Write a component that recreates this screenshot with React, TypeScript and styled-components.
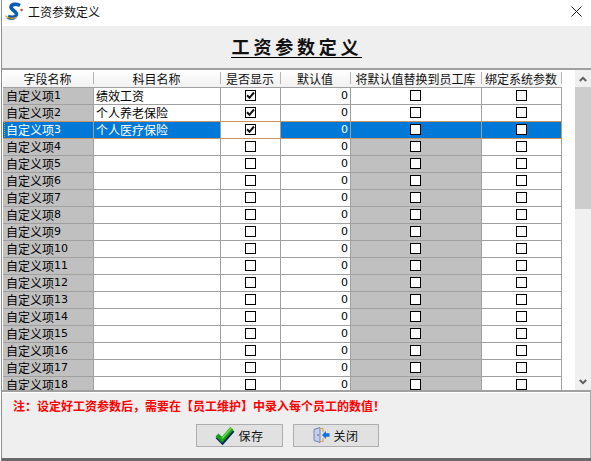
import React from "react"
import styled, { createGlobalStyle } from "styled-components"

const GlobalStyle = createGlobalStyle`
  html, body {
    margin: 0;
    padding: 0;
    background: #ffffff;
  }
  * {
    box-sizing: border-box;
  }
`

const COLUMNS = "91px 127px 60px 70px 131px 80px"
const FONT = `Tahoma, "DejaVu Sans", "Noto Sans CJK SC", sans-serif`
const CJK = `"Noto Sans CJK SC", sans-serif`
const DOTS = "#f58a20"

const Window = styled.div`
  width: 591px;
  height: 461px;
  display: flex;
  flex-direction: column;
  background: #ffffff;
  overflow: hidden;
  font-family: ${CJK};
  font-size: 12px;
  color: #000000;
  padding-left: 1px;
`

const Frame = styled.div`
  flex: 1;
  min-height: 0;
  display: flex;
  flex-direction: column;
  border-left: 1px solid #8f8f8f;
  border-bottom: 3px solid #696969;
`

const TitleBar = styled.div`
  height: 26px;
  flex: none;
  display: flex;
  align-items: center;
  padding: 0 9px 3px 2px;
  gap: 5px;
  background: #ffffff;
`

const TitleText = styled.div`
  flex: 1;
  font-size: 12px;
  color: #111111;
`

const Banner = styled.div`
  height: 42px;
  flex: none;
  display: flex;
  justify-content: center;
  align-items: center;
  padding-bottom: 1px;
  background: #efefef;
`

const BannerTitle = styled.div`
  font-size: 18px;
  line-height: 22px;
  font-weight: 700;
  letter-spacing: 3.8px;
  padding-left: 1px;
  border-bottom: 1px solid #000000;
  color: #111111;
`

const GridArea = styled.div`
  flex: 1;
  min-height: 0;
  display: flex;
  justify-content: space-between;
  border-top: 2px solid #a0a0a0;
  overflow: hidden;
`

const Table = styled.div`
  width: 560px;
  padding-left: 1px;
  display: flex;
  flex-direction: column;
`

const HeaderRow = styled.div`
  display: grid;
  grid-template-columns: ${COLUMNS};
  height: 18px;
  flex: none;
  background: linear-gradient(#ffffff, #f1f1f1);
  border-bottom: 1px solid #a0a0a0;
`

const HeaderCell = styled.div`
  display: flex;
  justify-content: center;
  align-items: center;
  line-height: 17px;
  white-space: nowrap;
  position: relative;
  padding-right: 2px;
  color: #111111;
  &::after {
    content: "";
    position: absolute;
    right: 0;
    top: 2px;
    bottom: 3px;
    width: 1px;
    background: #b4b4b4;
  }
`

const Row = styled.div<{ $selected?: boolean }>`
  display: grid;
  grid-template-columns: ${COLUMNS};
  height: 17px;
  flex: none;
  position: relative;
  background: ${(p) => (p.$selected ? "#0078d7" : "#ffffff")};
  color: ${(p) => (p.$selected ? "#ffffff" : "#000000")};
`

/* focus rectangle of the current row, drawn over the cells */
const FocusRect = styled.div`
  position: absolute;
  left: 1px;
  right: 0;
  top: -1px;
  bottom: 0;
  pointer-events: none;
  background:
    repeating-linear-gradient(90deg, ${DOTS} 0 1px, transparent 1px 2px) left top / 100% 1px no-repeat,
    repeating-linear-gradient(90deg, ${DOTS} 0 1px, transparent 1px 2px) left bottom / 100% 1px no-repeat,
    repeating-linear-gradient(0deg, ${DOTS} 0 1px, transparent 1px 2px) left top / 1px 100% no-repeat,
    repeating-linear-gradient(0deg, ${DOTS} 0 1px, transparent 1px 2px) right top / 1px 100% no-repeat;
`

const Cell = styled.div<{ $tone?: "gray" | "white" | "plain"; $align?: "left" | "center" | "right" }>`
  display: flex;
  align-items: center;
  height: 17px;
  line-height: 16px;
  white-space: nowrap;
  overflow: hidden;
  border-right: 1px solid #a0a0a0;
  border-bottom: 1px solid #a0a0a0;
  padding: ${(p) => (p.$align === "right" ? "0 2px 0 0" : p.$align === "center" ? "0" : "0 0 0 2px")};
  justify-content: ${(p) =>
    p.$align === "right" ? "flex-end" : p.$align === "center" ? "center" : "flex-start"};
  background: ${(p) =>
    p.$tone === "gray" ? "#c0c0c0" : p.$tone === "white" ? "#ffffff" : "transparent"};
`

const Label = styled.span`
  font-family: ${CJK};
  margin-left: 1px;
`

const Digits = styled.span`
  font-family: ${FONT};
  font-size: 11px;
`

const Box = styled.div`
  width: 11px;
  height: 11px;
  background: #ffffff;
  border: 1px solid #000000;
  display: flex;
  margin-bottom: 1px;
`

const WideColumnBox = styled(Box)`
  margin-right: 1px;
`

const ScrollBar = styled.div`
  width: 16px;
  flex: none;
  display: flex;
  flex-direction: column;
  background: #f0f0f0;
`

const ScrollButton = styled.div`
  height: 17px;
  flex: none;
  display: flex;
  justify-content: center;
  align-items: center;
`

const ScrollThumb = styled.div`
  height: 122px;
  flex: none;
  background: #cdcdcd;
`

const ScrollTrack = styled.div`
  flex: 1;
`

const Footer = styled.div`
  height: 68px;
  flex: none;
  display: flex;
  flex-direction: column;
  background: #efefef;
  border-top: 2px solid #a0a0a0;
  border-right: 1px solid #a8a8a8;
  box-shadow: inset 0 1px 0 #ffffff;
  padding: 6px 0 0 11px;
`

const Notice = styled.div`
  color: #ff0000;
  font-size: 12px;
  font-weight: 700;
  line-height: 16px;
  white-space: nowrap;
`

const Buttons = styled.div`
  display: flex;
  gap: 10px;
  margin: 10px 0 0 183px;
`

const Button = styled.div<{ $width: number }>`
  width: ${(p) => p.$width}px;
  height: 23px;
  display: flex;
  justify-content: center;
  align-items: center;
  gap: 3px;
  background: #e1e1e1;
  border: 1px solid #adadad;
  font-size: 12px;
  letter-spacing: 0.5px;
  color: #111111;
`

function Logo() {
  return (
    <svg width="19" height="20" viewBox="0 0 19 20">
      <path
        d="M16 3.500C12 1.500 7.500 2 7 5c-.4 3 6 4 5.500 7.500C12 15 8 16 4 14.500"
        stroke="#0a5cb4"
        strokeWidth="3.600"
        fill="none"
      />
      <path d="M1 13c1 4.500 8 6 13 1-4 2-8 2.500-10.500.5C2.500 14 1.500 13.500 1 13z" fill="#e3a91f" />
      <path d="M2 15.500c2 2.500 7 3.500 11 .5-3.500 1.300-7.500 1.300-11-.5z" fill="#12408f" />
      <circle cx="17.500" cy="8" r="1.200" fill="#d8342a" />
    </svg>
  )
}

function CloseIcon() {
  return (
    <svg width="11" height="11" viewBox="0 0 11 11">
      <path d="M.5.5l10 10M10.500.5l-10 10" stroke="#1a1a1a" strokeWidth="1" fill="none" />
    </svg>
  )
}

function Tick() {
  return (
    <svg width="9" height="9" viewBox="0 0 9 9">
      <path d="M1 4.200l2.500 2.600L8 1.500" stroke="#111111" strokeWidth="2" fill="none" />
    </svg>
  )
}

function Chevron({ down }: { down?: boolean }) {
  return (
    <svg width="8" height="6" viewBox="0 0 8 6">
      <path
        d={down ? "M.8 1l3.200 3.200L7.200 1" : "M.8 5l3.200-3.200L7.200 5"}
        stroke="#606060"
        strokeWidth="2"
        fill="none"
      />
    </svg>
  )
}

function SaveIcon() {
  return (
    <svg width="20" height="21" viewBox="0 0 20 21">
      <path d="M2.500 11.500l5 5L17.500 5" stroke="#0b2266" strokeWidth="5" fill="none" />
      <path d="M2 10l5 5L17 3.500" stroke="#16a016" strokeWidth="4.200" fill="none" />
      <path d="M7 13.500L16.500 3" stroke="#74dd48" strokeWidth="1.400" fill="none" />
    </svg>
  )
}

function DoorIcon() {
  return (
    <svg width="17" height="17" viewBox="0 0 17 17">
      <path d="M1 2.500L7 .5v15l-6-2z" fill="#c3cdec" stroke="#5d6fa8" strokeWidth=".8" />
      <path d="M7 1.500h3V5M10 11v3.500H7" fill="none" stroke="#d9a94a" strokeWidth="1.200" />
      <circle cx="5" cy="8" r=".8" fill="#4a5a90" />
      <path d="M9 8l4-4v2.300h3.500v3.400H13V12z" fill="#1272d8" />
    </svg>
  )
}

type RowData = {
  index: number
  subject?: string
  show?: boolean
}

const rows: RowData[] = Array.from({ length: 18 }, (_, i) => ({ index: i + 1 }))
rows[0] = { index: 1, subject: "绩效工资", show: true }
rows[1] = { index: 2, subject: "个人养老保险", show: true }
rows[2] = { index: 3, subject: "个人医疗保险", show: true }

const headers = ["字段名称", "科目名称", "是否显示", "默认值", "将默认值替换到员工库", "绑定系统参数"]

export default function App() {
  return (
    <>
      <GlobalStyle />
      <Window>
        <Frame>
          <TitleBar>
            <Logo />
            <TitleText>工资参数定义</TitleText>
            <CloseIcon />
          </TitleBar>
          <Banner>
            <BannerTitle>工资参数定义</BannerTitle>
          </Banner>
          <GridArea>
            <Table>
              <HeaderRow>
                {headers.map((h) => (
                  <HeaderCell key={h}>{h}</HeaderCell>
                ))}
              </HeaderRow>
              {rows.map((r) => {
                const selected = r.index === 3
                return (
                  <Row key={r.index} $selected={selected}>
                    <Cell $tone={selected ? "plain" : "gray"}>
                      <Label>自定义项</Label>
                      <Digits>{r.index}</Digits>
                    </Cell>
                    <Cell>{r.subject}</Cell>
                    <Cell $align="center" $tone={selected ? "white" : "plain"}>
                      <Box>{r.show && <Tick />}</Box>
                    </Cell>
                    <Cell $align="right">
                      <Digits>0</Digits>
                    </Cell>
                    <Cell $align="center" $tone={r.index > 3 ? "gray" : "plain"}>
                      <WideColumnBox />
                    </Cell>
                    <Cell $align="center">
                      <Box />
                    </Cell>
                    {selected && <FocusRect />}
                  </Row>
                )
              })}
            </Table>
            <ScrollBar>
              <ScrollButton>
                <Chevron />
              </ScrollButton>
              <ScrollThumb />
              <ScrollTrack />
              <ScrollButton>
                <Chevron down />
              </ScrollButton>
            </ScrollBar>
          </GridArea>
          <Footer>
            <Notice>注：设定好工资参数后，需要在【员工维护】中录入每个员工的数值！</Notice>
            <Buttons>
              <Button $width={87}>
                <SaveIcon />
                保存
              </Button>
              <Button $width={86}>
                <DoorIcon />
                关闭
              </Button>
            </Buttons>
          </Footer>
        </Frame>
      </Window>
    </>
  )
}
